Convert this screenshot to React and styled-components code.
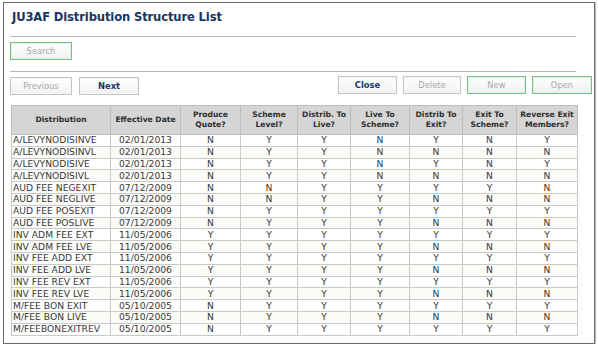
import React from "react";
import styled, { createGlobalStyle } from "styled-components";

const Global = createGlobalStyle`
  html, body { margin: 0; padding: 0; background: #ffffff; }
  body { font-family: "DejaVu Sans", Verdana, sans-serif; }
`;

const Panel = styled.div`
  box-sizing: border-box;
  margin: 2px 0 0 3px;
  width: 592px;
  height: 342px;
  border: 1px solid #6a6a6a;
  box-shadow: 1px 1px 1px #bdbdbd;
  padding: 0 6px 0 6px;
  display: flex;
  flex-direction: column;
  background: #fff;
`;

const Title = styled.h1`
  margin: 0;
  height: 33px;
  box-sizing: border-box;
  padding: 6px 0 0 2px;
  font-family: "DejaVu Sans", Verdana, sans-serif;
  font-weight: bold;
  font-size: 11.6px;
  letter-spacing: -0.15px;
  line-height: 16px;
  color: #1d3461;
`;

const Rule = styled.div`
  width: 566px;
  height: 1px;
  background: #b4b4b4;
  margin-bottom: ${(p) => p.$after}px;
`;

const Btn = styled.button`
  box-sizing: border-box;
  width: ${(p) => p.$w}px;
  height: 18px;
  padding: 0;
  margin: 0;
  font-family: "DejaVu Sans", Verdana, sans-serif;
  font-size: 8.4px;
  font-weight: ${(p) => (p.$active ? "bold" : "normal")};
  color: ${(p) => (p.$active ? "#1d3461" : "#a8a8a8")};
  background: linear-gradient(#ffffff, #f1f1f1);
  border: 1px solid ${(p) => (p.$green ? "#7dbd8a" : "#c4c4c4")};
  box-shadow: inset 0 0 0 1px ${(p) => (p.$green ? "#e3f2e6" : "#f6f6f6")};
  cursor: default;
`;

const SearchRow = styled.div`
  display: flex;
  margin-bottom: 11px;
`;

const ButtonBar = styled.div`
  display: flex;
  justify-content: space-between;
  align-items: flex-start;
  width: 582px;
  margin-bottom: 10px;
`;

const Group = styled.div`
  display: flex;
  gap: ${(p) => p.$gap}px;
  margin-top: ${(p) => p.$top || 0}px;
`;

const Table = styled.table`
  width: 566px;
  margin-left: 1px;
  border-collapse: collapse;
  table-layout: fixed;
  font-family: "DejaVu Sans", Verdana, sans-serif;
  font-size: 9.2px;
  color: #383838;
`;

const Th = styled.th`
  height: 28px;
  padding: 0 2px;
  background: #d5d5d5;
  border: 1px solid #bdbdbd;
  font-weight: bold;
  font-size: 7.6px;
  line-height: 10px;
  color: #2e2e2e;
  text-align: center;
  vertical-align: middle;
`;

const Tr = styled.tr`
  background: ${(p) => (p.$alt ? "#fbfbf7" : "#ffffff")};
`;

const Td = styled.td`
  height: 10.8px;
  padding: 0 2px;
  border: 1px solid #c9c9c9;
  line-height: 10px;
  white-space: nowrap;
  overflow: hidden;
  text-align: ${(p) => (p.$left ? "left" : "center")};
  padding-left: ${(p) => (p.$left ? "1px" : "2px")};
`;

const widths = [99, 70, 60, 57, 53, 59, 53, 54, 61];

const headers = [
  ["Distribution"],
  ["Effective Date"],
  ["Produce", "Quote?"],
  ["Scheme", "Level?"],
  ["Distrib. To", "Live?"],
  ["Live To", "Scheme?"],
  ["Distrib To", "Exit?"],
  ["Exit To", "Scheme?"],
  ["Reverse Exit", "Members?"],
];

const rows = [
  ["A/LEVYNODISINVE", "02/01/2013", "NYYNYNY"],
  ["A/LEVYNODISINVL", "02/01/2013", "NYYNNNN"],
  ["A/LEVYNODISIVE", "02/01/2013", "NYYNYNY"],
  ["A/LEVYNODISIVL", "02/01/2013", "NYYNNNN"],
  ["AUD FEE NEGEXIT", "07/12/2009", "NNYYYYN"],
  ["AUD FEE NEGLIVE", "07/12/2009", "NNYYNNN"],
  ["AUD FEE POSEXIT", "07/12/2009", "NYYYYYY"],
  ["AUD FEE POSLIVE", "07/12/2009", "NYYYNNN"],
  ["INV ADM FEE EXT", "11/05/2006", "YYYYYYY"],
  ["INV ADM FEE LVE", "11/05/2006", "YYYYNNN"],
  ["INV FEE ADD EXT", "11/05/2006", "YYYYYYY"],
  ["INV FEE ADD LVE", "11/05/2006", "YYYYNNN"],
  ["INV FEE REV EXT", "11/05/2006", "YYYYYYY"],
  ["INV FEE REV LVE", "11/05/2006", "YYYYNNN"],
  ["M/FEE BON EXIT", "05/10/2005", "NYYYYYY"],
  ["M/FEE BON LIVE", "05/10/2005", "NYYYNNN"],
  ["M/FEEBONEXITREV", "05/10/2005", "NYYYYYY"],
];

export default function App() {
  return (
    <>
      <Global />
      <Panel>
        <Title>JU3AF Distribution Structure List</Title>
        <Rule $after={5} />
        <SearchRow>
          <Btn $w={62} $green>Search</Btn>
        </SearchRow>
        <Rule $after={4} />
        <ButtonBar>
          <Group $gap={7} $top={1}>
            <Btn $w={62}>Previous</Btn>
            <Btn $w={60} $active>Next</Btn>
          </Group>
          <Group $gap={6}>
            <Btn $w={59} $active>Close</Btn>
            <Btn $w={58}>Delete</Btn>
            <Btn $w={59} $green>New</Btn>
            <Btn $w={60} $green>Open</Btn>
          </Group>
        </ButtonBar>
        <Table>
          <colgroup>
            {widths.map((w, i) => (
              <col key={i} style={{ width: w }} />
            ))}
          </colgroup>
          <thead>
            <tr>
              {headers.map((h, i) => (
                <Th key={i}>
                  {h.map((l, j) => (
                    <React.Fragment key={j}>
                      {j > 0 && <br />}
                      {l}
                    </React.Fragment>
                  ))}
                </Th>
              ))}
            </tr>
          </thead>
          <tbody>
            {rows.map((r, i) => (
              <Tr key={i} $alt={i % 2 === 1}>
                <Td $left>{r[0]}</Td>
                <Td>{r[1]}</Td>
                {r[2].split("").map((c, j) => (
                  <Td key={j}>{c}</Td>
                ))}
              </Tr>
            ))}
          </tbody>
        </Table>
      </Panel>
    </>
  );
}
